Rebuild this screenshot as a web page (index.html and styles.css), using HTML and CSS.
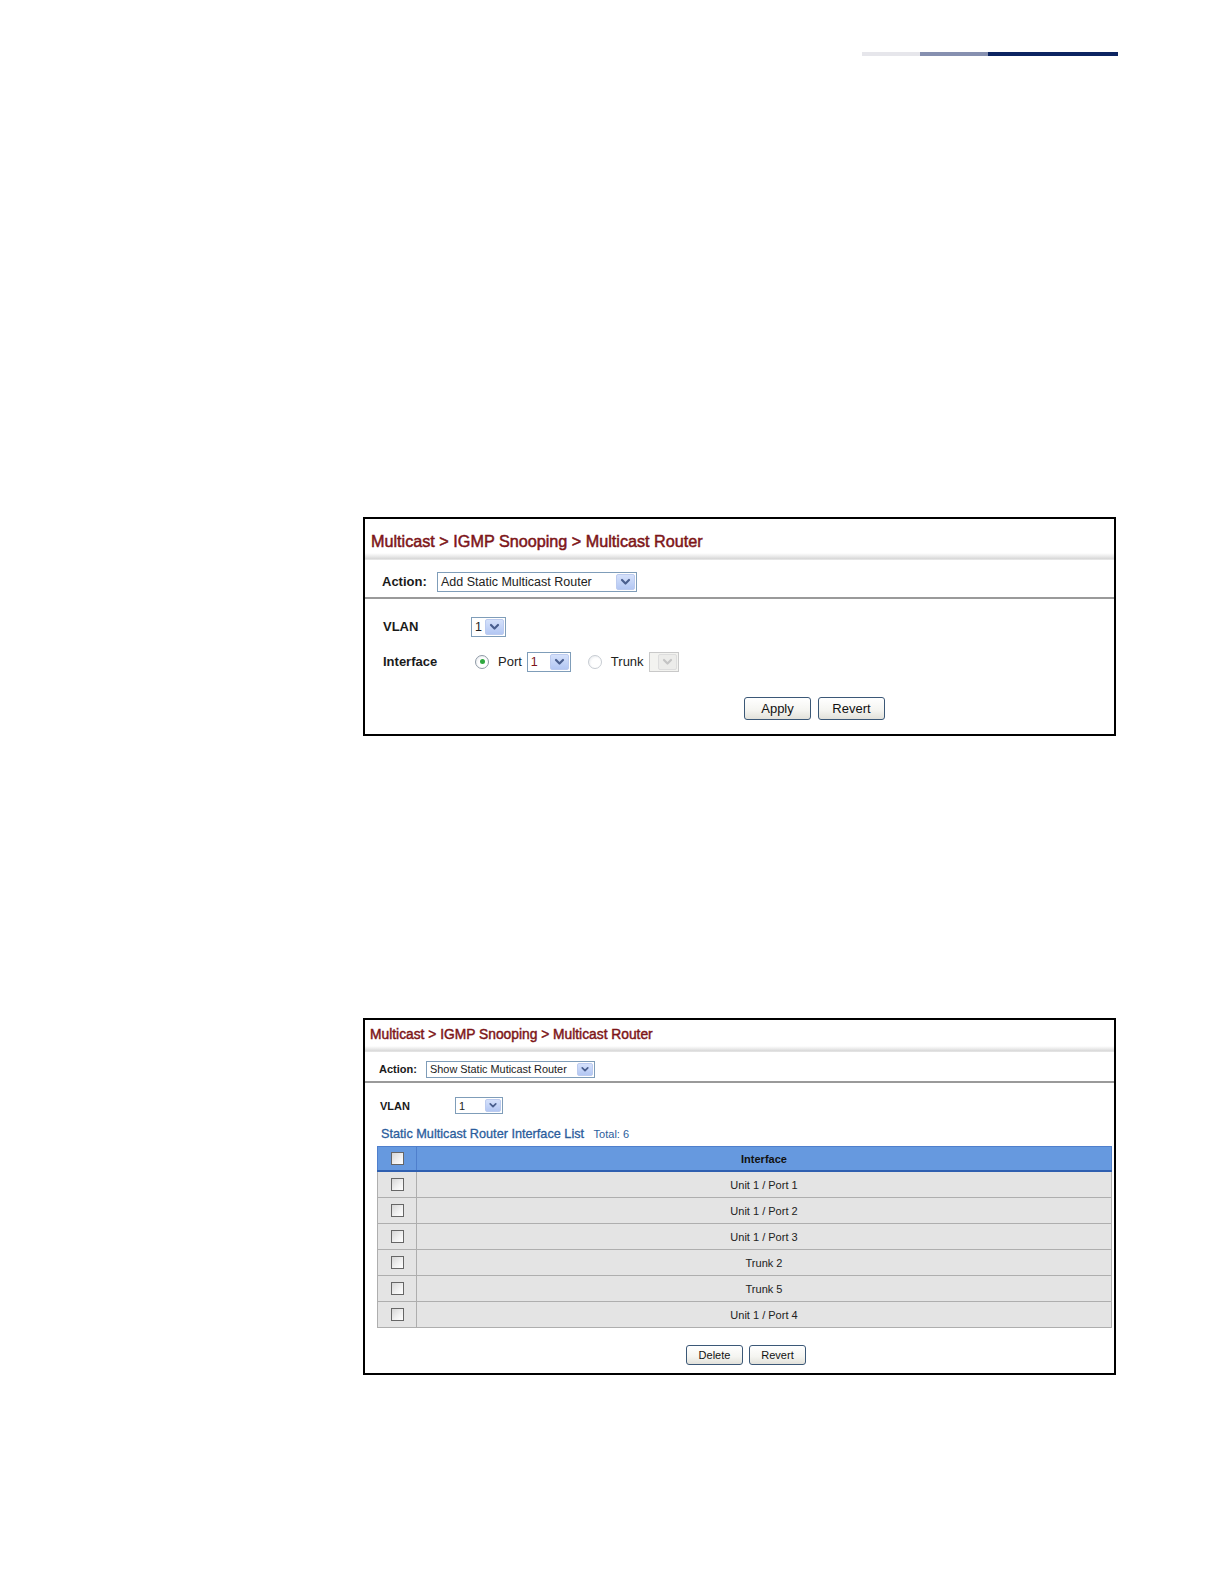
FILE: index.html
```html
<!DOCTYPE html>
<html lang="en">

<head>
    <meta charset="UTF-8">
    <title>Multicast Router</title>
    <link rel="stylesheet" href="styles.css">
</head>

<body>
    <div class="page">
        <div class="header-bar">
            <span class="seg seg-light"></span>
            <span class="seg seg-mid"></span>
            <span class="seg seg-dark"></span>
        </div>

        <!-- Add Static Multicast Router -->
        <div class="shot shot-add">
            <div class="shot-title">Multicast &gt; IGMP Snooping &gt; Multicast Router</div>
            <div class="title-shade"></div>
            <div class="action-row">
                <span class="label">Action:</span>
                <span class="select select-action">
                    <span class="select-text">Add Static Multicast Router</span>
                    <span class="select-btn"><svg viewBox="0 0 14 14"><path d="M3.5 5 L7 8.5 L10.5 5" /></svg></span>
                </span>
            </div>
            <div class="form-body">
                <div class="form-row">
                    <span class="label label-wide">VLAN</span>
                    <span class="select select-vlan">
                        <span class="select-text">1</span>
                        <span class="select-btn"><svg viewBox="0 0 14 14"><path d="M3.5 5 L7 8.5 L10.5 5" /></svg></span>
                    </span>
                </div>
                <div class="form-row">
                    <span class="label label-wide">Interface</span>
                    <span class="radio radio-on"></span>
                    <span class="opt-text">Port</span>
                    <span class="select select-port">
                        <span class="select-text red">1</span>
                        <span class="select-btn"><svg viewBox="0 0 14 14"><path d="M3.5 5 L7 8.5 L10.5 5" /></svg></span>
                    </span>
                    <span class="radio radio-off"></span>
                    <span class="opt-text">Trunk</span>
                    <span class="select select-trunk disabled">
                        <span class="select-text"></span>
                        <span class="select-btn"><svg viewBox="0 0 14 14"><path d="M3.5 5 L7 8.5 L10.5 5" /></svg></span>
                    </span>
                </div>
                <div class="button-row">
                    <button class="btn">Apply</button>
                    <button class="btn">Revert</button>
                </div>
            </div>
        </div>

        <!-- Show Static Multicast Router -->
        <div class="shot shot-list">
            <div class="shot-title">Multicast &gt; IGMP Snooping &gt; Multicast Router</div>
            <div class="title-shade"></div>
            <div class="action-row">
                <span class="label">Action:</span>
                <span class="select select-action">
                    <span class="select-text">Show Static Muticast Router</span>
                    <span class="select-btn"><svg viewBox="0 0 14 14"><path d="M3.5 5 L7 8.5 L10.5 5" /></svg></span>
                </span>
            </div>
            <div class="form-body">
                <div class="form-row">
                    <span class="label label-wide">VLAN</span>
                    <span class="select select-vlan">
                        <span class="select-text">1</span>
                        <span class="select-btn"><svg viewBox="0 0 14 14"><path d="M3.5 5 L7 8.5 L10.5 5" /></svg></span>
                    </span>
                </div>
                <div class="list-title">
                    Static Multicast Router Interface List
                    <span class="list-total">Total: 6</span>
                </div>
                <table class="iface-table">
                    <thead>
                        <tr>
                            <th class="check-col"><span class="checkbox"></span></th>
                            <th>Interface</th>
                        </tr>
                    </thead>
                    <tbody>
                        <tr><td class="check-col"><span class="checkbox"></span></td><td>Unit 1 / Port 1</td></tr>
                        <tr><td class="check-col"><span class="checkbox"></span></td><td>Unit 1 / Port 2</td></tr>
                        <tr><td class="check-col"><span class="checkbox"></span></td><td>Unit 1 / Port 3</td></tr>
                        <tr><td class="check-col"><span class="checkbox"></span></td><td>Trunk 2</td></tr>
                        <tr><td class="check-col"><span class="checkbox"></span></td><td>Trunk 5</td></tr>
                        <tr><td class="check-col"><span class="checkbox"></span></td><td>Unit 1 / Port 4</td></tr>
                    </tbody>
                </table>
                <div class="button-row">
                    <button class="btn">Delete</button>
                    <button class="btn">Revert</button>
                </div>
            </div>
        </div>
    </div>
</body>

</html>
```

FILE: styles.css
```css
body {
    margin: 0;
    padding: 0;
    background-color: #ffffff;
    font-family: "Liberation Sans", Arial, sans-serif;
    color: #111;
}

.page {
    padding-top: 52px;
}

.header-bar {
    display: flex;
    margin-left: 862px;
    width: 256px;
    height: 4px;
}

.seg {
    display: block;
    height: 100%;
}

.seg-light {
    width: 58px;
    background-color: #e6e6eb;
}

.seg-mid {
    width: 68px;
    background-color: #8690b0;
}

.seg-dark {
    flex: 1;
    background-color: #0c2461;
}

/* screenshot panels */
.shot {
    margin-left: 363px;
    width: 753px;
    border: 2px solid #000;
    box-sizing: border-box;
    background-color: #fff;
}

.shot-add {
    margin-top: 461px;
    height: 219px;
}

.shot-list {
    margin-top: 282px;
    height: 357px;
}

.shot-title {
    color: #7d1518;
    white-space: nowrap;
}

.shot-add .shot-title {
    font-size: 16.2px;
    line-height: 20px;
    padding: 12px 0 0 6px;
    height: 20px;
    -webkit-text-stroke: 0.5px #7d1518;
}

.shot-list .shot-title {
    font-size: 13.8px;
    line-height: 16px;
    padding: 7px 0 0 5px;
    height: 16px;
    -webkit-text-stroke: 0.45px #7d1518;
}

.title-shade {
    height: 7px;
    margin-top: 2px;
    background: linear-gradient(to bottom, #ffffff 0%, #ebebeb 45%, #d6d6d6 85%, #f2f2f2 100%);
}

.shot-list .title-shade {
    height: 6px;
    margin-top: 3px;
}

.action-row {
    display: flex;
    align-items: center;
    border-bottom: 2px solid #9a9a9a;
    box-sizing: border-box;
}

.shot-add .action-row {
    height: 39px;
    padding: 6px 0 0 17px;
}

.shot-list .action-row {
    height: 31px;
    padding: 5px 0 0 14px;
}

.label {
    font-weight: bold;
    color: #1a1a1a;
}

.shot-add .label {
    font-size: 13px;
    width: 55px;
}

.shot-list .label {
    font-size: 11px;
    width: 47px;
}

.shot-add .label-wide {
    width: 88px;
}

.shot-list .label-wide {
    width: 75px;
}

/* fake select boxes */
.select {
    display: inline-flex;
    align-items: center;
    justify-content: space-between;
    border: 1px solid #7f9db9;
    background-color: #fff;
    box-sizing: border-box;
}

.select-text {
    padding-left: 3px;
    color: #222;
    white-space: nowrap;
}

.select-text.red {
    color: #7d1518;
}

.select-btn {
    display: flex;
    align-items: center;
    justify-content: center;
    align-self: stretch;
    margin: 1px;
    background: linear-gradient(to bottom, #d5e1fb, #b3c7f3);
    border: 1px solid #bccbef;
    border-radius: 2px;
}

.select-btn svg {
    width: 100%;
    height: 100%;
    fill: none;
    stroke: #4a5f8e;
    stroke-width: 2.2;
    stroke-linecap: round;
    stroke-linejoin: round;
}

.shot-add .select {
    height: 20px;
    font-size: 12.5px;
}

.shot-add .select-btn {
    width: 17px;
}

.shot-list .select {
    height: 17px;
    font-size: 10.9px;
}

.shot-list .select-btn {
    width: 14px;
}

.shot-add .select-action {
    width: 200px;
}

.shot-list .select-action {
    width: 169px;
}

.shot-add .select-vlan {
    width: 35px;
}

.shot-list .select-vlan {
    width: 48px;
}

.select-port {
    width: 44px;
}

.select-trunk {
    width: 30px;
}

.select.disabled {
    border-color: #c9c9c9;
    background-color: #f3f3f0;
}

.select.disabled .select-btn {
    background: #ececea;
    border-color: #dddddd;
}

.select.disabled .select-btn svg {
    stroke: #c4c4c4;
}

.form-body {
    display: flex;
    flex-direction: column;
}

.shot-add .form-body {
    padding: 17px 0 0 18px;
}

.shot-list .form-body {
    padding: 14px 0 0 15px;
}

.form-row {
    display: flex;
    align-items: center;
}

.shot-add .form-row {
    height: 21px;
    margin-bottom: 14px;
}

.shot-add .form-row .opt-text {
    font-size: 13px;
}

.shot-list .form-row {
    height: 17px;
}

/* radio buttons */
.radio {
    width: 14px;
    height: 14px;
    border: 1px solid #8f9aa6;
    border-radius: 50%;
    box-sizing: border-box;
    background: radial-gradient(circle at 60% 60%, #ffffff 45%, #dfe3e8 100%);
    margin-left: 4px;
    margin-right: 9px;
    position: relative;
}

.radio-on::after {
    content: "";
    position: absolute;
    left: 3.5px;
    top: 3.5px;
    width: 5px;
    height: 5px;
    border-radius: 50%;
    background-color: #2fa83f;
}

.radio-off {
    border-color: #c7ccd2;
    margin-left: 17px;
}

.opt-text {
    color: #222;
    margin-right: 5px;
}

/* buttons */
.button-row {
    display: flex;
}

.shot-add .button-row {
    gap: 7px;
    margin: 11px 0 0 361px;
}

.shot-list .button-row {
    gap: 6px;
    margin: 17px 0 0 306px;
}

.btn {
    font-family: "Liberation Sans", Arial, sans-serif;
    border: 1px solid #3b5877;
    border-radius: 3px;
    background: linear-gradient(to bottom, #ffffff 0%, #f4f4f0 60%, #e2e1da 100%);
    color: #111;
    padding: 0;
    cursor: pointer;
}

.shot-add .btn {
    width: 67px;
    height: 23px;
    font-size: 13px;
}

.shot-list .btn {
    width: 57px;
    height: 20px;
    font-size: 11px;
}

/* interface list */
.list-title {
    color: #2b5d9c;
    font-size: 12.7px;
    margin-top: 12px;
    height: 16px;
    line-height: 16px;
    padding-left: 1px;
    -webkit-text-stroke: 0.3px #2b5d9c;
    white-space: nowrap;
}

.list-total {
    font-size: 11px;
    margin-left: 6px;
    -webkit-text-stroke: 0;
}

.iface-table {
    width: 735px;
    margin-left: -3px;
    margin-top: 4px;
    border-collapse: collapse;
    font-size: 11px;
}

.iface-table th {
    background-color: #6699df;
    color: #111;
    font-weight: bold;
    height: 23px;
    border-top: 1px solid #4f7fcc;
    border-bottom: 2px solid #2f5fb0;
    border-right: 1px solid #4f7fcc;
    text-align: center;
    padding: 0;
}

.iface-table th:first-child {
    border-left: 1px solid #4f7fcc;
}

.iface-table td {
    background-color: #e4e4e4;
    color: #222;
    height: 25px;
    text-align: center;
    padding: 0;
    border-bottom: 1px solid #aeaeae;
    border-right: 1px solid #aeaeae;
}

.iface-table td:first-child {
    border-left: 1px solid #aeaeae;
}

.check-col {
    width: 38px;
}

.checkbox {
    display: inline-block;
    width: 11px;
    height: 11px;
    border: 1px solid #666;
    background: linear-gradient(135deg, #d6d6d6 0%, #f2f2f2 60%, #ffffff 100%);
    vertical-align: middle;
}
```
